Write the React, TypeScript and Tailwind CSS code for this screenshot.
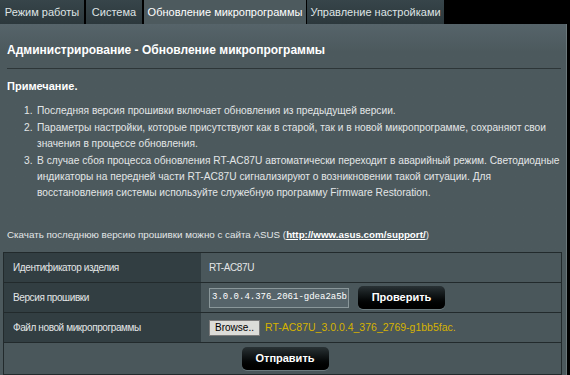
const tabs = [
  { label: "Режим работы", w: "w-[84px]", active: false },
  { label: "Система", w: "w-[56px]", active: false },
  { label: "Обновление микропрограммы", w: "w-[162px]", active: true },
  { label: "Управление настройками", w: "w-[137px]", active: false },
];

const notes = [
  "Последняя версия прошивки включает обновления из предыдущей версии.",
  "Параметры настройки, которые присутствуют как в старой, так и в новой микропрограмме, сохраняют свои значения в процессе обновления.",
  "В случае сбоя процесса обновления RT-AC87U автоматически переходит в аварийный режим. Светодиодные индикаторы на передней части RT-AC87U сигнализируют о возникновении такой ситуации. Для восстановления системы используйте служебную программу Firmware Restoration.",
];

function DarkButton({ label, className }: { label: string; className?: string }) {
  return (
    <button
      className={`h-[23px] w-[87px] rounded-[5px] bg-gradient-to-b from-[#2a3336] via-[#0b0f10] to-[#000] text-[11px] font-bold text-white shadow-[0_1px_0_#6b7a7e] ${className ?? ""}`}
    >
      {label}
    </button>
  );
}

export default function App() {
  return (
    <div className="h-[375px] w-[570px] overflow-hidden bg-black font-['Liberation_Sans',Arial,sans-serif] text-[#e6e6e6]">
      {/* Tabs */}
      <div className="flex h-[24px]">
        {tabs.map((t, i) => (
          <div
            key={t.label}
            className={`flex ${t.w} items-center justify-center text-[11px] ${
              t.active
                ? "bg-[#4d5a5e] text-white"
                : "bg-gradient-to-b from-[#37454a] to-[#2c383c] text-[#dfe4e5]"
            } ${i === 0 ? "mr-[2px]" : i === 1 ? "mr-[2px]" : i === 2 ? "mr-[1px]" : ""}`}
          >
            {t.label}
          </div>
        ))}
      </div>

      {/* Panel */}
      <div className="h-[351px] w-[567px] border-r border-[#6b787b] bg-gradient-to-b from-[#56646a] from-0% to-[#4c595d] to-[8%] pt-[18px]">
        <h1 className="mx-[7px] text-[12px] font-bold leading-[16px] text-white">
          Администрирование - Обновление микропрограммы
        </h1>
        <div className="mx-[7px] mr-[5px] mt-[10px] h-[2px] border-t border-[#2d3638] border-b-[#5d6a6e]" />

        <div className="mx-[7px] mt-[8px] text-[11px] font-bold leading-[16px] text-white">Примечание.</div>

        <ol className="ml-[24px] mr-[6px] mt-[9px] list-none text-[10.2px] leading-[16px] text-[#e3e6e7]">
          {notes.map((n, i) => (
            <li key={i} className="mb-[1px] flex">
              <span className="w-[13px] shrink-0">{i + 1}.</span>
              <span>{n}</span>
            </li>
          ))}
        </ol>

        <p className="mx-[7px] mt-[26px] text-[9.8px] leading-[16px] text-[#e3e6e7]">
          Скачать последнюю версию прошивки можно с сайта ASUS (
          <span className="font-bold text-white underline">http://www.asus.com/support/</span>)
        </p>

        {/* Table */}
        <div className="mx-[3px] mt-[9px] mr-[4px] border border-[#222a2c] text-[10px]">
          <div className="grid h-[30px] grid-cols-[197px_1fr] border-b border-[#222a2c]">
            <div className="flex items-center bg-[#323e42] pl-[9px] tracking-[-0.4px] text-[#e3e6e7]">Идентификатор изделия</div>
            <div className="flex items-center bg-[#4a575b] pl-[8px] tracking-[-0.4px] text-[#e3e6e7]">RT-AC87U</div>
          </div>
          <div className="grid h-[30px] grid-cols-[197px_1fr] border-b border-[#222a2c]">
            <div className="flex items-center bg-[#323e42] pl-[9px] tracking-[-0.4px] text-[#e3e6e7]">Версия прошивки</div>
            <div className="flex items-center gap-[9px] bg-[#4a575b] pl-[8px]">
              <div className="flex h-[20px] w-[140px] items-center border border-[#8a979a] bg-[#56646a] pl-[2px] font-['Liberation_Mono',monospace] text-[9px] text-white">
                3.0.0.4.376_2061-gdea2a5b
              </div>
              <DarkButton label="Проверить" />
            </div>
          </div>
          <div className="grid h-[30px] grid-cols-[197px_1fr] border-b border-[#222a2c]">
            <div className="flex items-center bg-[#323e42] pl-[9px] tracking-[-0.4px] text-[#e3e6e7]">Файл новой микропрограммы</div>
            <div className="flex items-center gap-[5px] bg-[#4a575b] pl-[8px]">
              <span className="flex h-[16px] w-[51px] items-center justify-center border border-[#7a7a7a] bg-[#dcdcd8] text-[10px] text-black">
                Browse..
              </span>
              <span className="text-[10.5px] text-[#d6b300]">RT-AC87U_3.0.0.4_376_2769-g1bb5fac.</span>
            </div>
          </div>
          <div className="flex h-[31px] items-center justify-center bg-[#4a575b] pl-[5px]">
            <DarkButton label="Отправить" />
          </div>
        </div>
      </div>
    </div>
  );
}
